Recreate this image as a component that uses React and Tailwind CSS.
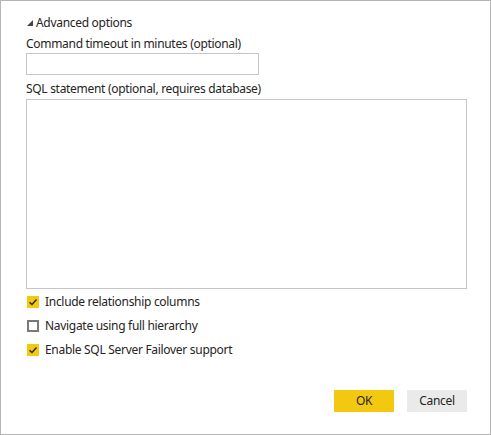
export default function App() {
  const font = { fontFamily: '"Segoe UI", "Noto Sans", "Open Sans", sans-serif' };

  const Check = ({ checked, label }) => (
    <label className="flex items-center h-[24px] gap-[6px]">
      {checked ? (
        <span className="w-[12px] h-[12px] bg-[#f2c811] flex items-center justify-center">
          <svg width="10" height="10" viewBox="0 0 10 10">
            <path d="M1.5 5.2 L4 7.5 L8.5 2.5" fill="none" stroke="#252423" strokeWidth="1.4" />
          </svg>
        </span>
      ) : (
        <span className="w-[12px] h-[12px] border-[2px] border-[#7a7a7a] bg-white" />
      )}
      <span>{label}</span>
    </label>
  );

  return (
    <div
      className="w-[491px] h-[435px] bg-white border border-[#b5b5b5] text-[12px] tracking-[-0.3px] text-[#252423] leading-[16px] flex flex-col"
      style={font}
    >
      <div className="pl-[25px] pt-[14px] flex flex-col">
        <div className="flex items-center h-[16px] gap-[3px] pl-[1px]">
          <svg width="6" height="6" viewBox="0 0 6 6">
            <path d="M6 0 L6 6 L0 6 Z" fill="#444" />
          </svg>
          <span>Advanced options</span>
        </div>
        <div className="mt-[5px] h-[16px]">Command timeout in minutes (optional)</div>
        <div className="mt-[1px] w-[233px] h-[22px] border border-[#c6c6c6]" />
        <div className="mt-[6px] h-[16px]">SQL statement (optional, requires database)</div>
        <div className="mt-[2px] w-[441px] h-[190px] border border-[#c6c6c6]" />
        <div className="mt-[1px] flex flex-col pl-[1px]">
          <Check checked label="Include relationship columns" />
          <Check checked={false} label="Navigate using full hierarchy" />
          <Check checked label="Enable SQL Server Failover support" />
        </div>
      </div>
      <div className="mt-[28px] flex justify-end gap-[13px] pr-[23px]">
        <button className="w-[60px] h-[22px] bg-[#f2c811] text-[#252423] text-[12px]">OK</button>
        <button className="w-[60px] h-[22px] bg-[#eaeaea] text-[#252423] text-[12px]">Cancel</button>
      </div>
    </div>
  );
}
